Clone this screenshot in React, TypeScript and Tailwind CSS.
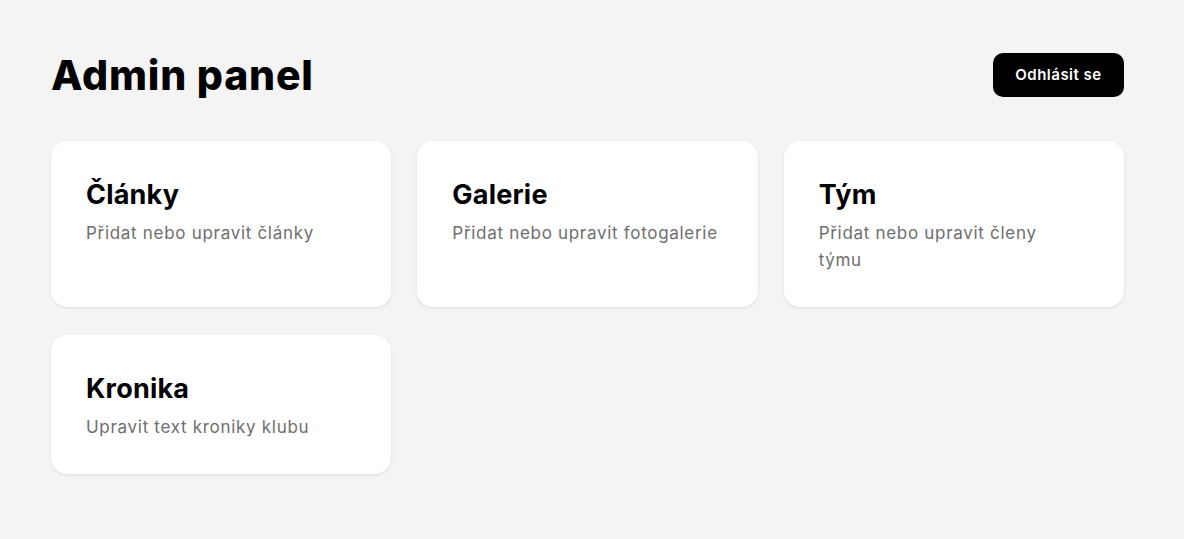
import React from "react";

const cards = [
  { title: "Články", desc: ["Přidat nebo upravit články"] },
  { title: "Galerie", desc: ["Přidat nebo upravit fotogalerie"] },
  { title: "Tým", desc: ["Přidat nebo upravit členy", "týmu"] },
  { title: "Kronika", desc: ["Upravit text kroniky klubu"] },
];

export default function App() {
  return (
    <div className="min-h-screen bg-[#f4f4f4] pl-[51px] pr-[60px] pt-[53px] pb-12">
      <div className="flex items-center justify-between mb-[44px] h-[44px]">
        <h1
          className="text-[41px] font-extrabold text-black leading-none tracking-[0.8px]"
          style={{ fontFamily: "Inter, sans-serif" }}
        >
          Admin panel
        </h1>
        <button
          className="h-[44px] w-[131px] rounded-[10px] bg-black text-white text-[15px] font-semibold tracking-[0.5px]"
          style={{ fontFamily: "Inter, sans-serif" }}
        >
          Odhlásit se
        </button>
      </div>
      <div className="grid grid-cols-3 gap-x-[26px] gap-y-[28px]">
        {cards.map((c) => (
          <div
            key={c.title}
            className="bg-white rounded-2xl shadow-[0_1px_3px_rgba(0,0,0,0.1)] px-[35px] pt-[36px] pb-[33px]"
          >
            <h2
              className="text-[27px] font-bold text-black leading-[36px] tracking-[0.2px]"
              style={{ fontFamily: "Inter, sans-serif" }}
            >
              {c.title}
            </h2>
            <p
              className="mt-[7px] text-[17px] leading-[27px] text-[#6e6e6e] tracking-[0.7px] whitespace-nowrap"
              style={{ fontFamily: "Inter, sans-serif" }}
            >
              {c.desc.map((line, i) => (
                <React.Fragment key={i}>
                  {i > 0 && <br />}
                  {line}
                </React.Fragment>
              ))}
            </p>
          </div>
        ))}
      </div>
    </div>
  );
}
